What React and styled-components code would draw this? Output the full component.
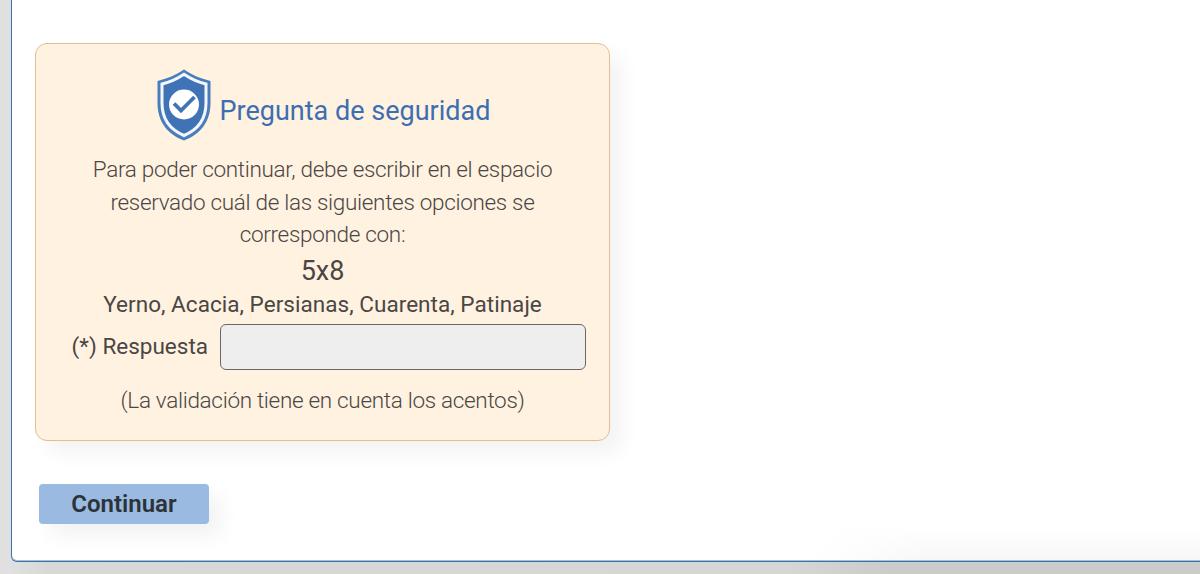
import styled, { createGlobalStyle } from "styled-components";

export default function App() {
  return (
    <>
      <GlobalStyle />
      <Page>
        <Panel>
          <Card>
            <CardHeader>
              <ShieldIcon />
              <Title>Pregunta de seguridad</Title>
            </CardHeader>
            <Text>
              Para poder continuar, debe escribir en el espacio
              <br />
              reservado cuál de las siguientes opciones se
              <br />
              corresponde con:
            </Text>
            <Question>5x8</Question>
            <Options>Yerno, Acacia, Persianas, Cuarenta, Patinaje</Options>
            <Field>
              <Label htmlFor="respuesta">(*) Respuesta</Label>
              <Input id="respuesta" type="text" />
            </Field>
            <Note>(La validación tiene en cuenta los acentos)</Note>
          </Card>
          <Button type="submit">Continuar</Button>
        </Panel>
      </Page>
    </>
  );
}

function ShieldIcon() {
  return (
    <Shield viewBox="0 0 54 72">
      <path
        fill="#4a7dbb"
        d="M27 0.5C34 5.5 43 9.5 53.5 12V34C53.5 53 43 65.5 27 71.5C11 65.5 0.5 53 0.5 34V12C11 9.5 20 5.5 27 0.5Z"
      />
      <path
        fill="#3f73b5"
        stroke="#f3f7fd"
        strokeWidth="3"
        d="M27 5.3C34 10 41.5 13.3 49 15V34C49 50 40.5 60.8 27 66.5C13.5 60.8 5 50 5 34V15C12.5 13.3 20 10 27 5.3Z"
      />
      <circle cx="27" cy="35.5" r="15" fill="#fff" />
      <path
        fill="none"
        stroke="#3f73b5"
        strokeWidth="3.8"
        d="M17 34.5L24 41.5L37.5 28"
      />
    </Shield>
  );
}

const GlobalStyle = createGlobalStyle`
  * {
    box-sizing: border-box;
  }

  body {
    margin: 0;
    background: #e1e0e1;
    color: #4a4644;
    font-family: Roboto, sans-serif;
    overflow: hidden;
  }
`;

const Page = styled.div`
  height: 574px;
  padding-left: 11px;
  background: linear-gradient(90deg, #e1e0e1 10px, #d9d8d9 50px, #d7d6d7 790px, #cbcbcb 890px);
  overflow: hidden;
`;

const Panel = styled.main`
  width: 1220px;
  height: 562px;
  padding: 43px 0 0 23px;
  border: 1px solid #3a70ad;
  border-top: 0;
  border-radius: 0 0 6px 6px;
  background:
    linear-gradient(90deg, #fff 800px, rgba(255, 255, 255, 0) 920px),
    linear-gradient(#fff 525px, #f7f7f7 562px);
  box-shadow: inset 0 -1px 0 #a9c0db;
`;

const Card = styled.section`
  width: 575px;
  height: 398px;
  padding: 25px 23px 0;
  border: 1px solid #e2bf91;
  border-radius: 12px;
  background: #fff2e1;
  box-shadow: 12px 12px 20px rgba(0, 0, 0, 0.05);
  text-align: center;
`;

const CardHeader = styled.div`
  display: flex;
  justify-content: center;
  gap: 9px;
  height: 85px;
  padding-left: 2px;
`;

const Shield = styled.svg`
  width: 54px;
  height: 72px;
`;

const Title = styled.h2`
  margin: 26px 0 0;
  color: #3d6eb1;
  font-size: 27px;
  font-weight: 400;
  line-height: 32px;
  white-space: nowrap;
`;

const Text = styled.p`
  margin: -1px 0 0;
  font-size: 22.5px;
  font-weight: 330;
  letter-spacing: -0.31px;
  line-height: 32.5px;
  white-space: nowrap;
`;

const Question = styled.p`
  margin: 2px 0 0;
  font-size: 27px;
  line-height: 36px;
`;

const Options = styled.p`
  margin: 0 -5px;
  font-size: 22.5px;
  letter-spacing: 0.04px;
  line-height: 31px;
  white-space: nowrap;
`;

const Field = styled.div`
  display: flex;
  justify-content: flex-end;
  gap: 12px;
  margin-top: 4px;
`;

const Label = styled.label`
  font-size: 22.5px;
  line-height: 45px;
`;

const Input = styled.input`
  width: 366px;
  height: 46px;
  padding: 0 12px;
  border: 1px solid #6a6764;
  border-radius: 6px;
  background: #eee;
  font: inherit;
`;

const Note = styled.p`
  margin: 13px 0 0;
  font-size: 22.5px;
  font-weight: 330;
  letter-spacing: -0.31px;
  line-height: 34px;
`;

const Button = styled.button`
  display: block;
  width: 170px;
  height: 40px;
  margin: 43px 0 0 4px;
  padding: 0;
  border: 0;
  border-radius: 4px;
  background: #9bbae1;
  box-shadow: 12px 12px 20px rgba(0, 0, 0, 0.05);
  color: #2b3238;
  font-family: inherit;
  font-size: 24px;
  font-weight: 600;
`;
